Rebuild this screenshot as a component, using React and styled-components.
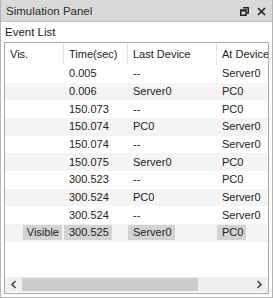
import React from 'react';
import styled, { createGlobalStyle } from 'styled-components';

const GlobalStyle = createGlobalStyle`
    body {
        margin:0;
        background:#fff;
        font-family:"Liberation Sans", Arial, sans-serif;
    }
`;

const events = [
    { vis: '', time: '0.005', last: '--', at: 'Server0' },
    { vis: '', time: '0.006', last: 'Server0', at: 'PC0' },
    { vis: '', time: '150.073', last: '--', at: 'PC0' },
    { vis: '', time: '150.074', last: 'PC0', at: 'Server0' },
    { vis: '', time: '150.074', last: '--', at: 'Server0' },
    { vis: '', time: '150.075', last: 'Server0', at: 'PC0' },
    { vis: '', time: '300.523', last: '--', at: 'PC0' },
    { vis: '', time: '300.524', last: 'PC0', at: 'Server0' },
    { vis: '', time: '300.524', last: '--', at: 'Server0' },
    { vis: 'Visible', time: '300.525', last: 'Server0', at: 'PC0', selected: true },
];

const columns = '59px 64px 89px 60px';

const App = () => {
    return (
        <>
            <GlobalStyle />
            <Panel>
                <TitleBar>
                    <Title>Simulation Panel</Title>
                    <TitleIcons>
                        <svg width="9" height="9" viewBox="0 0 9 9">
                            <path d="M3 0.75H8.25V6H6.5" fill="none" stroke="#222" strokeWidth="1.5" />
                            <rect x="0.75" y="3" width="5.25" height="5.25" fill="none" stroke="#222" strokeWidth="1.5" />
                            <path d="M0.75 3.75H6" stroke="#222" strokeWidth="1.5" />
                        </svg>
                        <svg width="9" height="9" viewBox="0 0 9 9">
                            <path d="M1 1L8 8M8 1L1 8" stroke="#222" strokeWidth="1.7" />
                        </svg>
                    </TitleIcons>
                </TitleBar>
                <Body>
                    <Label>Event List</Label>
                    <TableBox>
                        <Rows>
                            <HeaderRow>
                                <HeadCell>Vis.</HeadCell>
                                <HeadCell>Time(sec)</HeadCell>
                                <HeadCell>Last Device</HeadCell>
                                <HeadCell>At Device</HeadCell>
                            </HeaderRow>
                            {events.map((e, i) => (
                                <Row key={i} striped={i % 2 === 1}>
                                    <Cell right>{e.vis && <Mark selected={e.selected} right>{e.vis}</Mark>}</Cell>
                                    <Cell><Mark selected={e.selected}>{e.time}</Mark></Cell>
                                    <Cell><Mark selected={e.selected}>{e.last}</Mark></Cell>
                                    <Cell><Mark selected={e.selected}>{e.at}</Mark></Cell>
                                </Row>
                            ))}
                        </Rows>
                        <ScrollBar>
                            <Arrow>
                                <svg width="7" height="9" viewBox="0 0 7 9">
                                    <path d="M5.5 1L2 4.5L5.5 8" fill="none" stroke="#444" strokeWidth="1.6" />
                                </svg>
                            </Arrow>
                            <Track>
                                <Thumb />
                            </Track>
                            <Arrow>
                                <svg width="7" height="9" viewBox="0 0 7 9">
                                    <path d="M1.5 1L5 4.5L1.5 8" fill="none" stroke="#444" strokeWidth="1.6" />
                                </svg>
                            </Arrow>
                        </ScrollBar>
                    </TableBox>
                </Body>
            </Panel>
        </>
    );
};

const Panel = styled.div`
    width:273px;
    height:298px;
    box-sizing:border-box;
    border:1px solid #b4b4b4;
    border-top:none;
    display:flex;
    flex-direction:column;
    background:#fff;
    color:#222;
    font-size:11px;
`;

const TitleBar = styled.div`
    height:21px;
    flex:none;
    display:flex;
    align-items:center;
    justify-content:space-between;
    padding:0 6px 0 5px;
    background:#d9d9d9;
    border-bottom:1px solid #c4c4c4;
`;

const Title = styled.div`
    font-size:11.5px;
    color:#2a2a2a;
`;

const TitleIcons = styled.div`
    display:flex;
    align-items:center;
    gap:8px;
    padding-top:1px;
`;

const Body = styled.div`
    flex:1;
    display:flex;
    flex-direction:column;
    padding:0 3px 3px 3px;
    min-height:0;
`;

const Label = styled.div`
    height:20px;
    flex:none;
    line-height:21px;
    padding-left:1px;
    font-size:11.5px;
`;

const TableBox = styled.div`
    flex:1;
    min-height:0;
    border:1px solid #a8a8a8;
    display:flex;
    flex-direction:column;
    overflow:hidden;
`;

const Rows = styled.div`
    flex:1;
    overflow:hidden;
`;

const HeaderRow = styled.div`
    display:grid;
    grid-template-columns:${columns};
    height:22px;
`;

const HeadCell = styled.div`
    display:flex;
    align-items:center;
    padding-left:5px;
    border-right:1px solid #e6e6e6;
    white-space:nowrap;
    overflow:hidden;
    &:last-child {
        border-right:none;
    }
`;

const Row = styled.div`
    display:grid;
    grid-template-columns:${columns};
    height:17.67px;
    background:${props => props.striped ? '#f4f4f4' : '#fff'};
`;

const Cell = styled.div`
    display:flex;
    align-items:center;
    justify-content:${props => props.right ? 'flex-end' : 'flex-start'};
    white-space:nowrap;
    overflow:hidden;
`;

const Mark = styled.span`
    line-height:15px;
    padding:${props => props.right ? '0 3px 0 4px' : '0 3px 0 5px'};
    margin-right:${props => props.right ? '2px' : '0'};
    background:${props => props.selected ? '#d3d3d3' : 'transparent'};
`;

const ScrollBar = styled.div`
    height:15px;
    flex:none;
    display:flex;
    align-items:stretch;
    background:#f0f0f0;
    margin-bottom:1px;
`;

const Arrow = styled.div`
    width:17px;
    display:flex;
    align-items:center;
    justify-content:center;
`;

const Track = styled.div`
    flex:1;
    padding:1px 0;
    display:flex;
`;

const Thumb = styled.div`
    width:176px;
    background:#cdcdcd;
`;

export default App;
